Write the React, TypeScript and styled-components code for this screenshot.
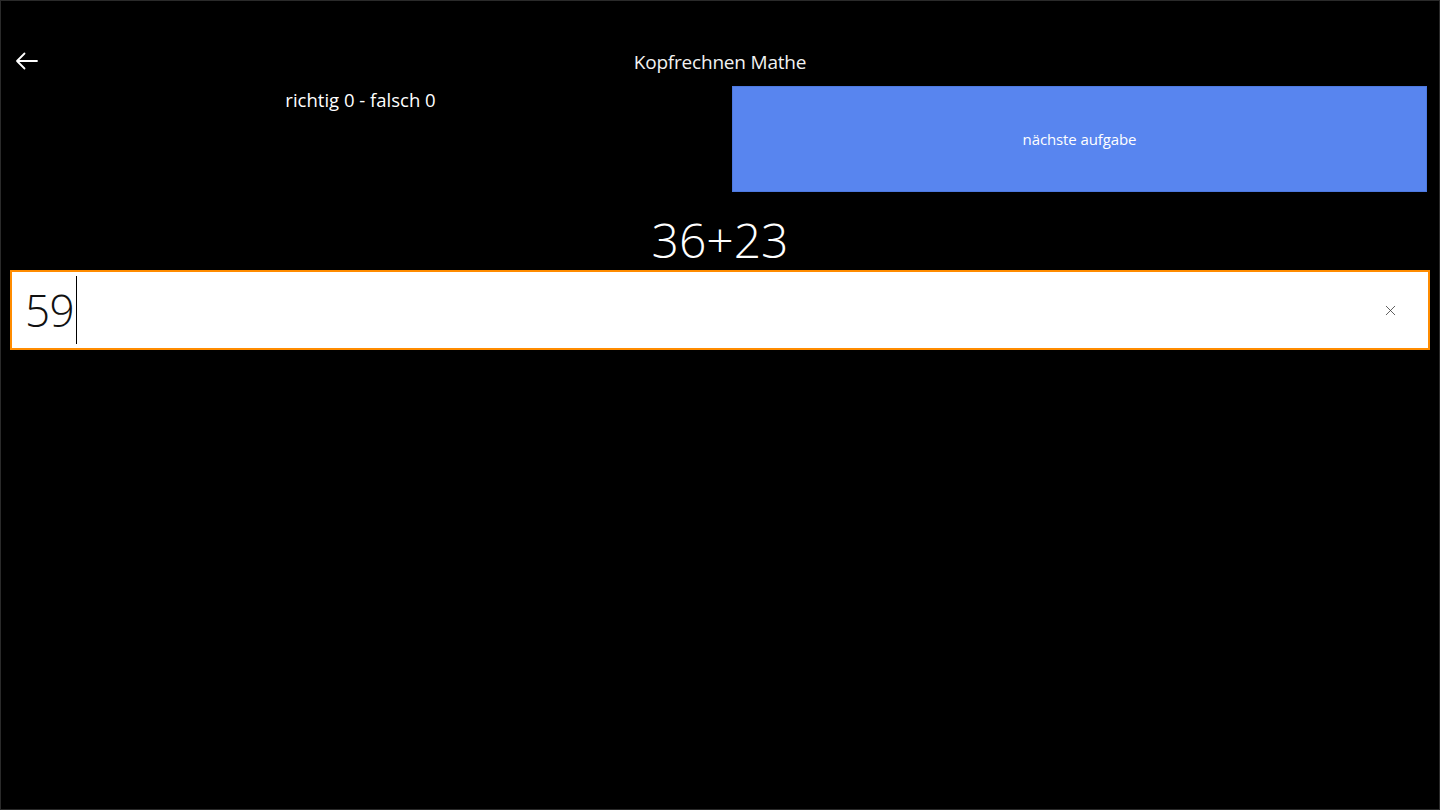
import React, { useState } from 'react'
import styled, { createGlobalStyle } from 'styled-components'
import { X } from 'lucide-react'

const GlobalStyle = createGlobalStyle`
  html, body {
    margin: 0;
    padding: 0;
    background: #000;
  }
  * {
    box-sizing: border-box;
  }
`

const App = () => {
  const [answer, setAnswer] = useState('59')

  return (
    <>
      <GlobalStyle />
      <Frame>
        <Header>
          <BackButton aria-label="zurück">
            <svg width="23" height="18" viewBox="0 0 23 18" fill="none">
              <path d="M22 9H2M9.5 1.5L2 9l7.5 7.5" stroke="#fff" strokeWidth="1.8" strokeLinecap="round" strokeLinejoin="round" />
            </svg>
          </BackButton>
          <Title>Kopfrechnen Mathe</Title>
        </Header>

        <TopRow>
          <Score>richtig 0 - falsch 0</Score>
          <NextButton>nächste aufgabe</NextButton>
        </TopRow>

        <Task>36+23</Task>

        <AnswerBox>
          <AnswerText>
            {answer}
            <Caret />
          </AnswerText>
          <ClearButton aria-label="löschen" onClick={() => setAnswer('')}>
            <X size={17} strokeWidth={1.1} color="#333" />
          </ClearButton>
        </AnswerBox>
      </Frame>
    </>
  )
}

export default App

const Frame = styled.div`
  width: 1440px;
  height: 810px;
  background: #000;
  border: 1px solid #2a2a2a;
  display: flex;
  flex-direction: column;
  font-family: "Open Sans", "Noto Sans", sans-serif;
  color: #fff;
  overflow: hidden;
`

const Header = styled.div`
  position: relative;
  height: 40px;
  margin-top: 41px;
  display: flex;
  align-items: center;
  justify-content: center;
`

const BackButton = styled.button`
  position: absolute;
  left: 14px;
  top: 50%;
  transform: translateY(-50%);
  margin-top: -1px;
  background: none;
  border: none;
  padding: 0;
  display: flex;
  cursor: pointer;
`

const Title = styled.div`
  font-size: 19px;
  font-weight: 400;
  letter-spacing: -0.2px;
  color: #f2f2f2;
`

const TopRow = styled.div`
  display: grid;
  grid-template-columns: 1fr 695px;
  height: 106px;
  margin-top: 4px;
  padding-right: 12px;
`

const Score = styled.div`
  text-align: center;
  font-size: 18.5px;
  line-height: 24px;
  padding-top: 2px;
  padding-right: 12px;
  letter-spacing: 0;
`

const NextButton = styled.button`
  background: #5885ef;
  border: 1px solid #4d79e0;
  color: #fff;
  font-family: inherit;
  font-size: 15px;
  letter-spacing: -0.1px;
  cursor: pointer;
`

const Task = styled.div`
  text-align: center;
  font-size: 48px;
  font-weight: 300;
  line-height: 58px;
  margin-top: 19px;
`

const AnswerBox = styled.div`
  margin: 1px 9px 0 9px;
  height: 80px;
  background: #fff;
  border: 2px solid #ff8c00;
  display: flex;
  align-items: center;
  padding-left: 13px;
  padding-right: 29px;
`

const AnswerText = styled.div`
  flex: 1;
  display: flex;
  align-items: center;
  color: #111;
  font-size: 44px;
  font-weight: 300;
  letter-spacing: -0.5px;
`

const Caret = styled.span`
  display: inline-block;
  width: 1px;
  height: 68px;
  background: #000;
  margin-left: 2px;
`

const ClearButton = styled.button`
  background: none;
  border: none;
  padding: 0;
  display: flex;
  cursor: pointer;
`
